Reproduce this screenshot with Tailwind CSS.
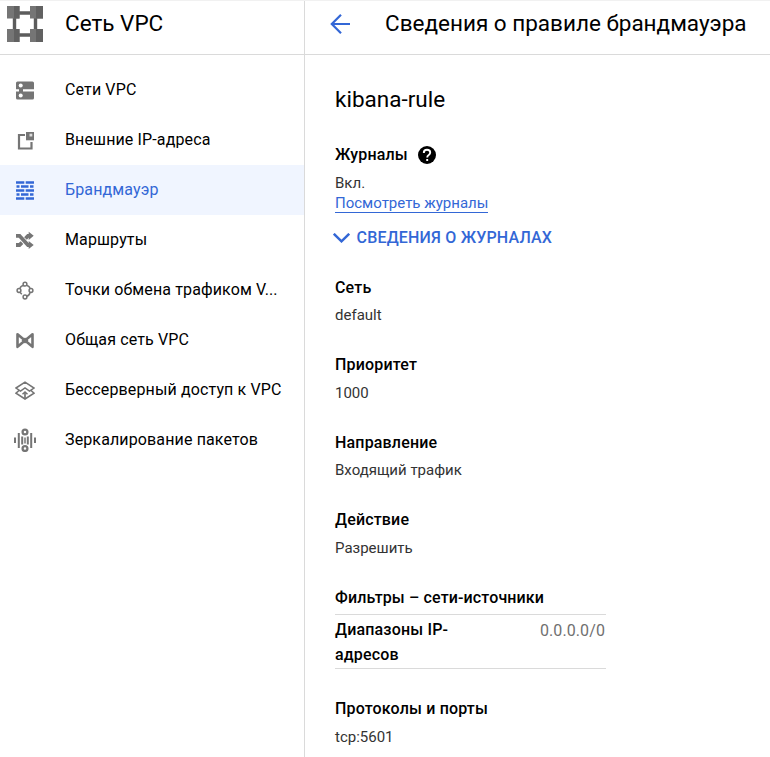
<!DOCTYPE html>
<html lang="ru">
<head>
<meta charset="utf-8">
<title>Сеть VPC</title>
<script src="https://cdn.jsdelivr.net/npm/@tailwindcss/browser@4"></script>
</head>
<body class="bg-white font-[Roboto,sans-serif] text-black">
<div class="flex h-[757px] w-[770px] overflow-hidden border-t border-[#f1f1f1]">
  <aside class="flex w-[305px] shrink-0 flex-col border-r border-[#dadada]">
    <header class="flex h-[54px] shrink-0 items-center border-b border-[#dadada] pb-[9px] pl-[7px]">
      <svg class="mt-px h-9 w-9 shrink-0" viewBox="0 0 36 36">
        <path d="M7.500 7H28.500V29H7.500Z" fill="none" stroke="#5c5c5c" stroke-width="3.400"/>
        <path d="M0 0H12.500V12.500H0ZM23 0H36V12.500H23ZM0 23H12.500V36H0ZM23 23H36V36H23Z" fill="#757575"/>
        <path d="M7 0H12.500V12.500H7ZM29 0H36V12.500H29ZM7 23H12.500V36H7ZM29 23H36V36H29Z" fill="#616161"/>
      </svg>
      <h1 class="ml-[22px] text-[22.5px] leading-7">Сеть VPC</h1>
    </header>
    <nav class="mt-[10px] text-base tracking-[0.13px]">
      <a class="flex h-[50px] items-center pl-4"><svg class="mt-px h-[19px] w-[18px] shrink-0" viewBox="0 0 18 19"><path d="M1.500 .5H16.500Q18 .5 18 2V8.300H7V10.500H18V17Q18 18.500 16.500 18.500H1.500Q0 18.500 0 17V10.500H3V8.300H0V2Q0 .5 1.500 .5Z" fill="#757575"/><circle cx="4.700" cy="4.500" r="2" fill="#fff"/><circle cx="4.700" cy="14.500" r="2" fill="#fff"/></svg><span class="ml-[31px]">Сети VPC</span></a>
      <a class="flex h-[50px] items-center pl-4"><svg class="mt-px h-[19px] w-[18px] shrink-0" viewBox="0 0 18 19"><path d="M9 4H3V17.500H15.500V11" fill="none" stroke="#757575" stroke-width="2.200"/><path d="M10 1H18V9.300H10Z" fill="#757575"/><path d="M13.500 2.700H16.300V5.500H13.500Z" fill="#ddd"/></svg><span class="ml-[31px]">Внешние IP-адреса</span></a>
      <a class="flex h-[50px] items-center bg-[#f0f5ff] pl-4 text-[#3367d6]"><svg class="mt-px h-[19px] w-[18px] shrink-0" viewBox="0 0 18 19"><path d="M0 1.500H8.300M9.700 1.500H18M.5 5.500H3.500M5 5.500H12.500M14 5.500H17.500M0 9.500H8.300M9.700 9.500H18M.5 13.500H3.500M5 13.500H12.500M14 13.500H17.500M0 17.500H8.300M9.700 17.500H18" fill="none" stroke="#3367d6" stroke-width="2.300"/></svg><span class="ml-[31px]">Брандмауэр</span></a>
      <a class="flex h-[50px] items-center pl-4"><svg class="mt-px h-[19px] w-[18px] shrink-0" viewBox="0 0 18 19"><path d="M0 4.800H3.500L12 14H14M0 14H3.500L6 11.700M9.500 7.500L12 4.800H14" fill="none" stroke="#757575" stroke-width="3.800"/><path d="M12.700 .7L17.700 4.800L12.700 8.900ZM12.700 9.900L17.700 14L12.700 18.100Z" fill="#757575"/></svg><span class="ml-[31px]">Маршруты</span></a>
      <a class="flex h-[50px] items-center pl-4"><svg class="mt-px h-[19px] w-[18px] shrink-0" viewBox="0 0 18 19"><g fill="none" stroke="#757575" stroke-width="1.500"><circle cx="9" cy="3.200" r="1.900"/><circle cx="3" cy="9.500" r="1.900"/><circle cx="15" cy="9.500" r="1.900"/><circle cx="9" cy="16" r="1.900"/><path d="M7.300 4.500Q4.500 5 4 7.700M10.700 4.500Q13.500 5 14 7.700M4 11.300L5.800 13.200M10.800 15.300Q13.500 14.500 14 11.300"/></g></svg><span class="ml-[31px]">Точки обмена трафиком V...</span></a>
      <a class="flex h-[50px] items-center pl-4"><svg class="mt-px h-[19px] w-[18px] shrink-0" viewBox="0 0 18 19"><path d="M1.500 3.200L16.500 15.800V3.200L1.500 15.800Z" fill="none" stroke="#757575" stroke-width="2.600" stroke-linejoin="round"/><path d="M9 6.500L12.500 9.500L9 12.500L5.500 9.500Z" fill="#757575"/></svg><span class="ml-[31px]">Общая сеть VPC</span></a>
      <a class="flex h-[50px] items-center pl-[15px]"><svg class="mt-px h-[19px] w-5 shrink-0" viewBox="0 0 20 19"><g fill="none" stroke="#757575" stroke-width="1.500"><path d="M1 7L10 1.200L19 7L14.500 10L10 7L5.500 10ZM4 9.500L1 12.200L10 18L19 12.200L16 9.500"/><path d="M10 18V12" stroke-width="1.700"/><path d="M7.500 13.300L10 11L12.500 13.300"/></g></svg><span class="ml-[30px]">Бессерверный доступ к VPC</span></a>
      <a class="flex h-[50px] items-center pl-[14px]"><svg class="h-6 w-[22px] shrink-0" viewBox="0 0 22 24"><g fill="none" stroke="#757575" stroke-width="2"><path d="M1 9.500V15M4.800 5V20M8.200 8.500V16.500M13.800 8.500V16.500M17.200 5V20M21 9.500V15"/><path d="M11 9.500V15.500" stroke-width="1.500"/><circle cx="11" cy="4" r="2.400" stroke-width="2.300"/><circle cx="11" cy="20.500" r="2.400" stroke-width="2.300"/></g></svg><span class="ml-[29px]">Зеркалирование пакетов</span></a>
    </nav>
  </aside>
  <main class="flex min-w-0 flex-1 flex-col">
    <header class="flex h-[54px] shrink-0 items-center border-b border-[#dadada] pb-[8px] pl-[25px]">
      <svg class="h-5 w-5 shrink-0" viewBox="0 0 20 20"><path d="M20 10H1.500M11 .8L1.800 10L11 19.200" fill="none" stroke="#3367d6" stroke-width="2.200"/></svg>
      <h2 class="ml-[35px] pb-[2px] whitespace-nowrap text-[22.5px] leading-7">Сведения о правиле брандмауэра</h2>
    </header>
    <div class="flex flex-col pl-[30px] text-[15px] leading-5 text-[#333]">
      <h3 class="mt-[30px] text-[22.5px] leading-7 text-black">kibana-rule</h3>
      <div class="mt-[32px] flex h-5 items-center text-base font-medium tracking-[0.17px] text-black">
        <h4>Журналы</h4>
        <svg class="ml-[10px] h-[18px] w-[18px]" viewBox="0 0 18 18"><circle cx="9" cy="9" r="9"/><path d="M5.800 6.900Q5.800 3.700 9 3.700Q12.200 3.700 12.200 6.500Q12.200 7.900 10.700 9Q9.200 10 9.200 11.500M9.200 13V15" fill="none" stroke="#fff" stroke-width="1.900"/></svg>
      </div>
      <p class="mt-[8px]">Вкл.</p>
      <a class="h-5 self-start border-b border-[#3367d6] text-[#3367d6]">Посмотреть журналы</a>
      <div class="mt-[15px] -ml-[2px] flex h-5 items-center text-base font-medium tracking-[0.19px] text-[#3367d6]">
        <svg class="h-[10px] w-[17px]" viewBox="0 0 17 10"><path d="M.8 .8L8.500 8.300L16.200 .8" fill="none" stroke="#3367d6" stroke-width="2.500"/></svg>
        <span class="ml-[6.500px]">СВЕДЕНИЯ О ЖУРНАЛАХ</span>
      </div>
      <h4 class="mt-[30px] text-base/5 font-medium tracking-[0.17px] text-black">Сеть</h4>
      <p class="mt-[7px]">default</p>
      <h4 class="mt-[30px] text-base/5 font-medium tracking-[0.17px] text-black">Приоритет</h4>
      <p class="mt-[8px]">1000</p>
      <h4 class="mt-[30px] text-base/5 font-medium tracking-[0.17px] text-black">Направление</h4>
      <p class="mt-[7px]">Входящий трафик</p>
      <h4 class="mt-[30px] text-base/5 font-medium tracking-[0.17px] text-black">Действие</h4>
      <p class="mt-[8px]">Разрешить</p>
      <h4 class="mt-[30px] text-base/5 font-medium tracking-[0.14px] text-black">Фильтры – сети-источники</h4>
      <div class="mt-[6px] flex h-[55px] w-[271px] justify-between border-y border-[#dadada] pt-[2px] text-base leading-[25px]">
        <div class="font-medium tracking-[0.17px] text-black">Диапазоны IP-<br>адресов</div>
        <div class="pt-px pr-px tracking-[0.1px] text-[#707070]">0.0.0.0/0</div>
      </div>
      <h4 class="mt-[30px] text-base/5 font-medium tracking-[0.17px] text-black">Протоколы и порты</h4>
      <p class="mt-[8px]">tcp:5601</p>
    </div>
  </main>
</div>
</body>
</html>
